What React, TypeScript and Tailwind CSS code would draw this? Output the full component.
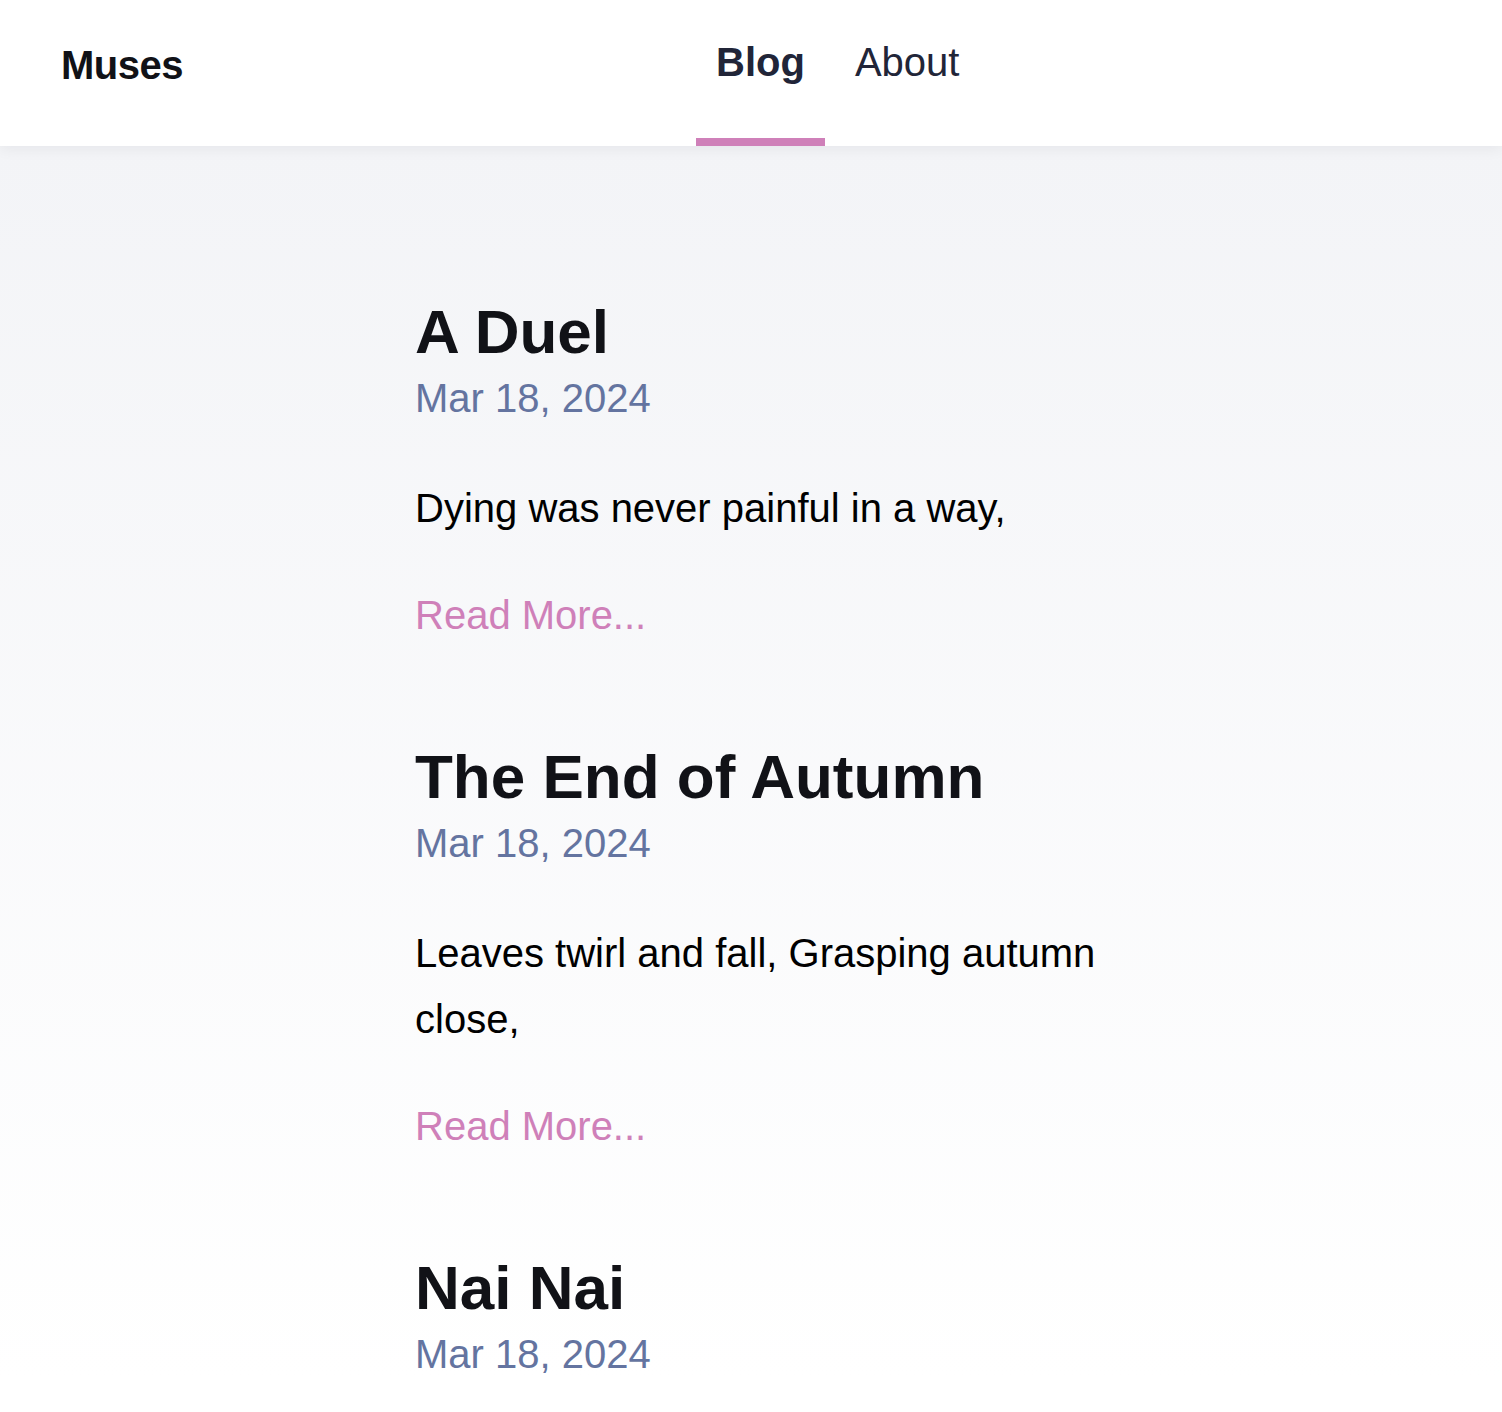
const font = { fontFamily: '"Liberation Sans", Arial, Helvetica, sans-serif' };

interface Post {
  title: string;
  date: string;
  excerpt?: string;
}

const posts: Post[] = [
  { title: "A Duel", date: "Mar 18, 2024", excerpt: "Dying was never painful in a way," },
  {
    title: "The End of Autumn",
    date: "Mar 18, 2024",
    excerpt: "Leaves twirl and fall, Grasping autumn close,",
  },
  { title: "Nai Nai", date: "Mar 18, 2024" },
];

function NavItem({ label, active = false }: { label: string; active?: boolean }) {
  return (
    <a
      href="#"
      className={[
        "block h-full px-5 pt-[38px] text-[40px] leading-[48px] text-[#212538] border-b-8",
        active ? "font-bold border-[#cf80b9]" : "border-transparent",
      ].join(" ")}
    >
      {label}
    </a>
  );
}

function PostCard({ post }: { post: Post }) {
  return (
    <article className="mb-[99px]">
      <h2 className="text-[62px] leading-[60px] font-bold text-[#111217]">{post.title}</h2>
      <p className="mt-3 text-[40px] leading-[48px] text-[#6474a0]">{post.date}</p>
      {post.excerpt && (
        <p className="mt-[53px] text-[40px] leading-[66px] text-black">{post.excerpt}</p>
      )}
      {post.excerpt && (
        <a href="#" className="block mt-[41px] text-[40px] leading-[66px] text-[#cf80b9]">
          Read More...
        </a>
      )}
    </article>
  );
}

export default function App() {
  return (
    <div style={font} className="min-h-screen bg-white">
      {/* Header */}
      <header className="relative z-10 h-[146px] bg-white grid grid-cols-[635px_1fr] pl-[61px] shadow-[0_3px_14px_rgba(20,24,40,0.06)]">
        <div className="pt-[41px] text-[40px] leading-[48px] font-bold tracking-[-0.5px] text-[#111217]">
          Muses
        </div>
        <nav className="flex h-full gap-2.5">
          <NavItem label="Blog" active />
          <NavItem label="About" />
        </nav>
      </header>

      {/* Posts */}
      <main className="bg-gradient-to-b from-[#f3f4f7] to-white pt-[156px]">
        <div className="mx-auto max-w-[768px] pl-12">
          {posts.map((post) => (
            <PostCard key={post.title} post={post} />
          ))}
        </div>
      </main>
    </div>
  );
}
